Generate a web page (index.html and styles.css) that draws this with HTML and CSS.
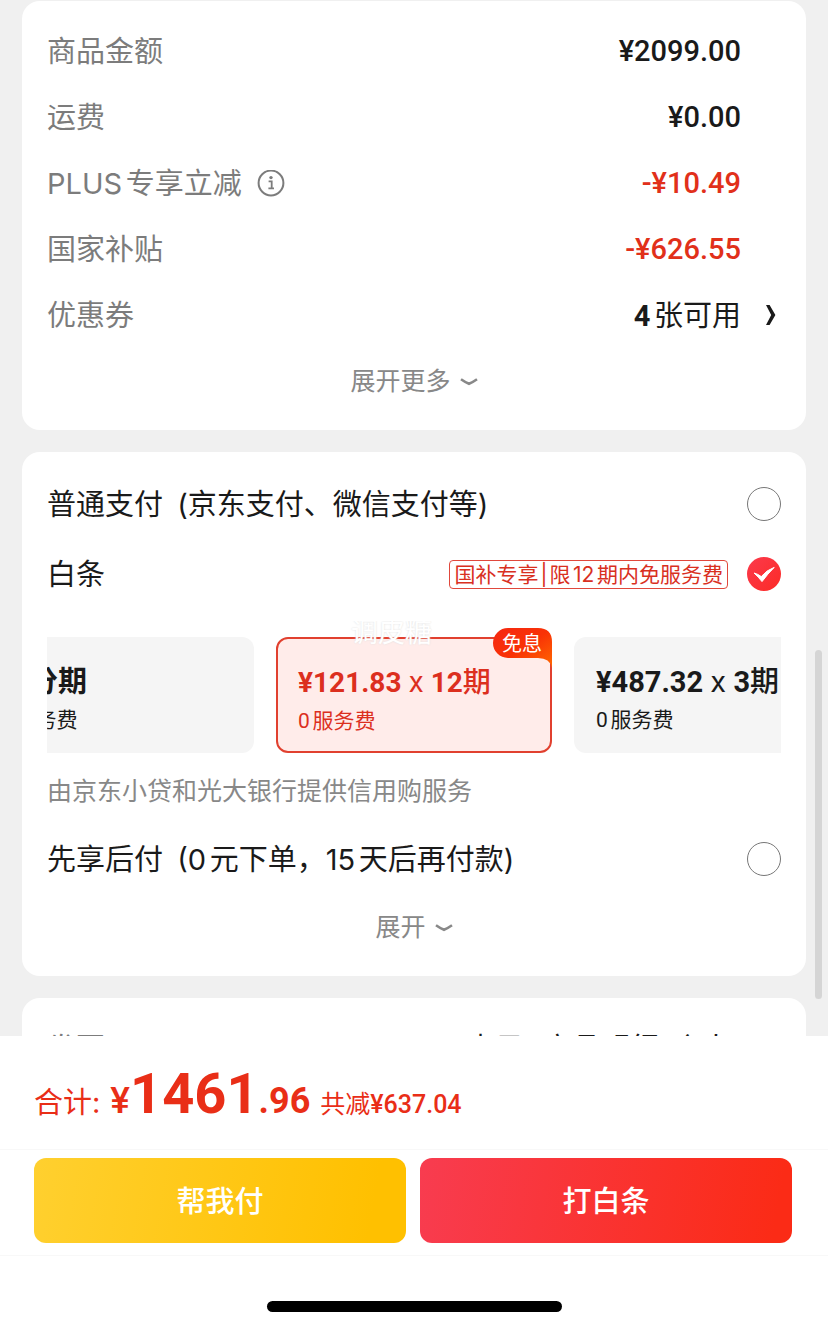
FILE: index.html
```html
<!DOCTYPE html>
<html lang="zh-CN">
<head>
<meta charset="utf-8">
<meta name="viewport" content="width=device-width, initial-scale=1">
<title>确认订单</title>
<link rel="stylesheet" href="styles.css">
</head>
<body>
<main class="content">
  <section class="card summary">
    <div class="row"><span class="label">商品金额</span><span class="amount">¥2099.00</span></div>
    <div class="row"><span class="label">运费</span><span class="amount">¥0.00</span></div>
    <div class="row">
      <span class="label">PLUS专享立减
        <svg class="info" viewBox="0 0 28 28" aria-hidden="true"><circle cx="14" cy="13" r="12.4" fill="none" stroke="currentColor" stroke-width="2"/><circle cx="14" cy="7.6" r="1.7" fill="currentColor"/><path d="M11.6 11.4h3.1v6.8M11.4 18.4h5.6" fill="none" stroke="currentColor" stroke-width="1.8"/></svg>
      </span>
      <span class="amount discount">-¥10.49</span>
    </div>
    <div class="row"><span class="label">国家补贴</span><span class="amount discount">-¥626.55</span></div>
    <div class="row">
      <span class="label">优惠券</span>
      <span class="coupon"><b>4</b>张可用</span>
      <svg class="arrow" viewBox="0 0 12 24" aria-hidden="true"><path d="M1 2L4.6 2L10.4 12L4.6 22L1 22L6.2 12Z" fill="currentColor"/></svg>
    </div>
    <button class="more" type="button">展开更多
      <svg class="down" viewBox="0 0 18 10" aria-hidden="true"><path d="M1 2.2Q5 5 9 6.8Q13 5 17 2.2" fill="none" stroke="currentColor" stroke-width="2.6"/></svg>
    </button>
  </section>

  <section class="card payment">
    <div class="method">
      <label for="pay-normal">普通支付 <span class="aside">(京东支付、微信支付等)</span></label>
      <input class="radio" type="radio" name="pay" id="pay-normal">
    </div>
    <div class="method">
      <label for="pay-credit">白条</label>
      <span class="tag">国补专享<span class="bar">|</span>限12期内免服务费</span>
      <span class="tick">
        <input class="radio" type="radio" name="pay" id="pay-credit" checked>
        <svg viewBox="0 0 34 34" aria-hidden="true"><path d="M7 16Q11 17 14.3 19.6Q19.5 13 27.2 10.4Q20.5 17 15 24.6Q11.5 20 7 16Z" fill="#fff" stroke="#fff" stroke-width="1"/></svg>
      </span>
    </div>
    <div class="plans">
      <button class="plan" type="button"><span class="plan-title">不分期</span><span class="plan-fee">0服务费</span></button>
      <button class="plan selected" type="button">
        <span class="plan-title">¥121.83 <i>x</i> 12<em>期</em></span><span class="plan-fee">0服务费</span>
        <span class="badge">
          <svg viewBox="0 0 60 40" aria-hidden="true"><defs><linearGradient id="badge-fill" x1="0" y1="0" x2="1" y2="1"><stop offset="0" stop-color="#f52812"/><stop offset="0.5" stop-color="#f93206"/><stop offset="1" stop-color="#ff6a00"/></linearGradient></defs><path d="M16 0H46Q60 0 60 14V40Q58 30 46 30H16A15 15 0 0 1 16 0Z" fill="url(#badge-fill)"/></svg>
          <span class="badge-text">免息</span>
        </span>
      </button>
      <button class="plan" type="button"><span class="plan-title">¥487.32 <i>x</i> 3<em>期</em></span><span class="plan-fee">0服务费</span></button>
      <span class="watermark">调皮糖</span>
    </div>
    <p class="note">由京东小贷和光大银行提供信用购服务</p>
    <div class="method later">
      <label for="pay-later">先享后付 <span class="aside">(0元下单，15天后再付款)</span></label>
      <input class="radio" type="radio" name="pay" id="pay-later">
    </div>
    <button class="more" type="button">展开
      <svg class="down" viewBox="0 0 18 10" aria-hidden="true"><path d="M1 2.2Q5 5 9 6.8Q13 5 17 2.2" fill="none" stroke="currentColor" stroke-width="2.6"/></svg>
    </button>
  </section>

  <section class="card invoice">
    <div class="row"><span class="label">发票</span><span class="coupon">电子 (商品明细-个人)</span></div>
  </section>
  <div class="scrollbar"></div>
</main>

<footer class="footer">
  <div class="total">
    <span class="total-label">合计:</span>
    <span class="total-price"><span class="yen">¥</span><strong>1461</strong><span class="cents">.96</span></span>
    <span class="saved">共减<b>¥637.04</b></span>
  </div>
  <div class="actions">
    <button class="action help" type="button">帮我付</button>
    <button class="action credit" type="button">打白条</button>
  </div>
  <div class="home"><span class="home-bar"></span></div>
</footer>
</body>
</html>
```
FILE: styles.css
```css
* { box-sizing: border-box; }

body {
  margin: 0;
  height: 100vh;
  display: flex;
  flex-direction: column;
  background: #f0f0f0;
  color: #1a1a1a;
  font-family: Inter, "Noto Sans CJK SC", sans-serif;
  font-size: 29px;
  line-height: 1.25;
  text-autospace: normal;
}

button {
  padding: 0;
  border: 0;
  background: none;
  color: inherit;
  font: inherit;
}

.content {
  position: relative;
  flex: 1;
  min-height: 0;
  overflow: hidden;
  display: flex;
  flex-direction: column;
  gap: 22px;
  padding: 1px 22px 0;
}

.card {
  flex: none;
  padding: 17px 25px 16px;
  border-radius: 18px;
  background: #fff;
}

.row {
  display: grid;
  grid-template-columns: 1fr auto 40px;
  align-items: center;
  height: 66px;
}

.label {
  display: flex;
  align-items: center;
  gap: 15px;
  color: #7c7c7c;
}

.label,
.coupon,
.method label { padding-top: 2px; }

.info { width: 28px; height: 28px; }

.amount {
  font-family: Roboto, "Noto Sans CJK SC", sans-serif;
  font-weight: 500;
}

.discount { color: #e1301a; }

.coupon b { font-family: Roboto, sans-serif; }

.arrow {
  width: 12px;
  height: 24px;
  margin-right: 4px;
  justify-self: end;
}

.more {
  display: flex;
  align-items: center;
  justify-content: center;
  gap: 9px;
  width: 100%;
  height: 66px;
  padding-top: 2px;
  color: #888;
  font-size: 25px;
}

.down { width: 18px; height: 10px; }

.payment { padding-bottom: 11px; }
.payment .more { height: 76px; }

.method {
  display: flex;
  align-items: center;
  height: 70px;
}

.method label { flex: 1; }
.aside { margin-left: 6px; }
.later { height: 60px; }

.radio {
  appearance: none;
  width: 34px;
  height: 34px;
  margin: 0;
  border: 1px solid #777;
  border-radius: 50%;
  background: #fff;
}

.radio:checked {
  border: 0;
  background: linear-gradient(135deg, #fb3a4c, #fc2a26);
}

.tick { display: grid; }
.tick > * { grid-area: 1 / 1; }
.tick svg { width: 34px; height: 34px; pointer-events: none; }

.tag {
  margin-right: 19px;
  padding: 1px 4px 0;
  border: 1px solid #e0483c;
  border-radius: 4px;
  color: #d9301f;
  font-size: 21px;
  line-height: 26px;
}

.bar { margin: 0 2px; }

.plans {
  position: relative;
  display: flex;
  justify-content: center;
  gap: 22px;
  margin-top: 12px;
  padding-top: 16px;
  overflow: hidden;
}

.plan {
  position: relative;
  flex: none;
  display: flex;
  flex-direction: column;
  width: 276px;
  height: 116px;
  padding: 26px 0 0 22px;
  border-radius: 12px;
  background: #f5f5f5;
  text-align: left;
  white-space: nowrap;
}

.plan-title {
  font-family: Roboto, "Noto Sans CJK SC", sans-serif;
  font-weight: 700;
  line-height: 38px;
  text-autospace: no-autospace;
}

.plan-title i {
  font-family: Inter, sans-serif;
  font-style: normal;
  font-weight: 400;
}

.plan-title em { font-style: normal; font-weight: 500; }

.plan-fee {
  font-family: Roboto, "Noto Sans CJK SC", sans-serif;
  font-size: 21px;
  line-height: 38px;
}

.selected {
  padding: 24px 0 0 20px;
  border: 2px solid #e1402f;
  background: #ffecea;
  color: #dc2f1e;
}

.selected .plan-title { font-size: 28px; }

.badge {
  position: absolute;
  top: -11px;
  right: -2px;
  width: 60px;
  height: 40px;
}

.badge svg { display: block; width: 60px; height: 40px; }

.badge-text {
  position: absolute;
  inset: 0 0 10px;
  color: #fff;
  font-size: 20px;
  line-height: 32px;
  text-align: center;
}

.watermark {
  position: absolute;
  top: 0;
  left: 50%;
  margin-left: -63px;
  color: #fff;
  font-size: 27px;
  line-height: 24px;
  text-shadow: 0 0 2px #ddd;
}

.note {
  margin: 0;
  color: #888;
  font-size: 25px;
  line-height: 76px;
}

.invoice { padding-top: 17px; }

.scrollbar {
  position: absolute;
  top: 650px;
  right: 6px;
  width: 7px;
  height: 349px;
  border-radius: 4px;
  background: #d5d5d5;
}

.footer { flex: none; background: #fff; }

.total {
  display: flex;
  align-items: baseline;
  gap: 10px;
  height: 113px;
  padding: 23px 34px 0;
  color: #e92e17;
}

.total-label { font-size: 29px; text-autospace: no-autospace; }

.total-price {
  font-family: Roboto, sans-serif;
  font-size: 37px;
  font-weight: 500;
}

.total-price strong { font-size: 56px; font-weight: 700; }
.cents { font-size: 36px; font-weight: 700; }
.saved { font-size: 25px; text-autospace: no-autospace; }
.saved b { font-family: Roboto, sans-serif; font-weight: 500; }

.actions {
  display: grid;
  grid-template-columns: 1fr 1fr;
  gap: 14px;
  padding: 8px 36px 12px 34px;
  border-top: 1px solid #f8f8f8;
  border-bottom: 1px solid #f8f8f8;
}

.action {
  height: 85px;
  padding-top: 3px;
  border-radius: 12px;
  color: #fff;
  font-weight: 500;
}

.help { background: linear-gradient(100deg, #ffd02f, #ffc000 90%); }
.credit { background: linear-gradient(100deg, #f83c50, #fb2b16 95%); }

.home {
  display: flex;
  justify-content: center;
  height: 73px;
  padding-top: 45px;
}

.home-bar {
  width: 295px;
  height: 11px;
  border-radius: 6px;
  background: #000;
}
```
